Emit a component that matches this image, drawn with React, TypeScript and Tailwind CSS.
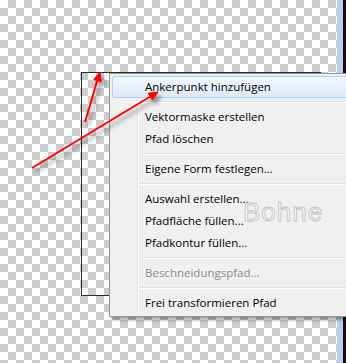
import React from "react";

type Entry = { label: string; disabled?: boolean; active?: boolean } | "sep";

const entries: Entry[] = [
  { label: "Ankerpunkt hinzufügen", active: true },
  "sep",
  { label: "Vektormaske erstellen" },
  { label: "Pfad löschen" },
  "sep",
  { label: "Eigene Form festlegen..." },
  "sep",
  { label: "Auswahl erstellen..." },
  { label: "Pfadfläche füllen..." },
  { label: "Pfadkontur füllen..." },
  "sep",
  { label: "Beschneidungspfad...", disabled: true },
  "sep",
  { label: "Frei transformieren Pfad" },
];

function ContextMenu() {
  return (
    <div className="absolute left-[109px] top-[73px] w-[260px] border border-[#979797] bg-[#f0f0f0] p-[2px] shadow-[3px_3px_3px_rgba(0,0,0,0.35)]">
      {/* gutter line */}
      <div className="absolute left-[27px] top-[2px] bottom-[2px] w-[2px] border-l border-[#e2e3e3] bg-white" />
      {entries.map((e, i) =>
        e === "sep" ? (
          <div key={i} className="relative flex h-[8px] items-center pl-[28px]">
            <div className="h-[2px] w-full border-t border-[#e0e0e0] bg-white" />
          </div>
        ) : (
          <div
            key={i}
            className={
              e.active
                ? "relative flex h-[22px] items-center rounded-[3px] border border-[#aecff7] bg-gradient-to-b from-[#f2f7fd] to-[#dde9f7] pl-[32px] text-black"
                : e.disabled
                ? "relative flex h-[22px] items-center pl-[33px] text-[#8d8d8d]"
                : "relative flex h-[22px] items-center pl-[33px] text-black"
            }
          >
            {e.label}
          </div>
        )
      )}
    </div>
  );
}

function Arrows() {
  return (
    <svg className="absolute left-0 top-0" width={346} height={363} viewBox="0 0 346 363">
      <defs>
        <filter id="sh" x="-20%" y="-20%" width="140%" height="140%">
          <feDropShadow dx="3" dy="4" stdDeviation="2" floodColor="#000" floodOpacity="0.45" />
        </filter>
      </defs>
      <g filter="url(#sh)" fill="#f00" stroke="#f00">
        <line x1="85" y1="122" x2="98" y2="78" strokeWidth="2" />
        <polygon points="100,72 101.2,81.7 93.6,79.5" strokeWidth="1" />
        <line x1="32" y1="168" x2="152" y2="95.5" strokeWidth="2" />
        <polygon points="158,92 152.4,100.1 148.2,93.2" strokeWidth="1" />
      </g>
    </svg>
  );
}

export default function App() {
  return (
    <div className="flex h-[363px] w-[346px] overflow-hidden font-['Open_Sans',sans-serif] text-[11.5px]">
      <div className="relative h-full flex-1 overflow-hidden bg-[conic-gradient(#cccccc_25%,#ffffff_0_50%,#cccccc_0_75%,#ffffff_0)] bg-[length:16px_16px]">
        {/* path outline on canvas */}
        <div className="absolute left-[81px] top-[72px] h-[224px] w-[240px] border border-[#2b2b2b]" />
      </div>
      <div className="h-full w-[6px] bg-[#b4d0ee]" />
      <div className="h-full w-[3px] bg-[#2a0505]" />
      <div className="pointer-events-none absolute left-0 top-0 h-[363px] w-[346px] overflow-hidden">
        <ContextMenu />
        <div className="absolute left-[243px] top-[199px] font-['Liberation_Sans',sans-serif] text-[26px] leading-none tracking-[1px] text-[#f8f8f8] [-webkit-text-stroke:0.8px_#c0c0c0]">
          Bohne
        </div>
        <Arrows />
      </div>
    </div>
  );
}
